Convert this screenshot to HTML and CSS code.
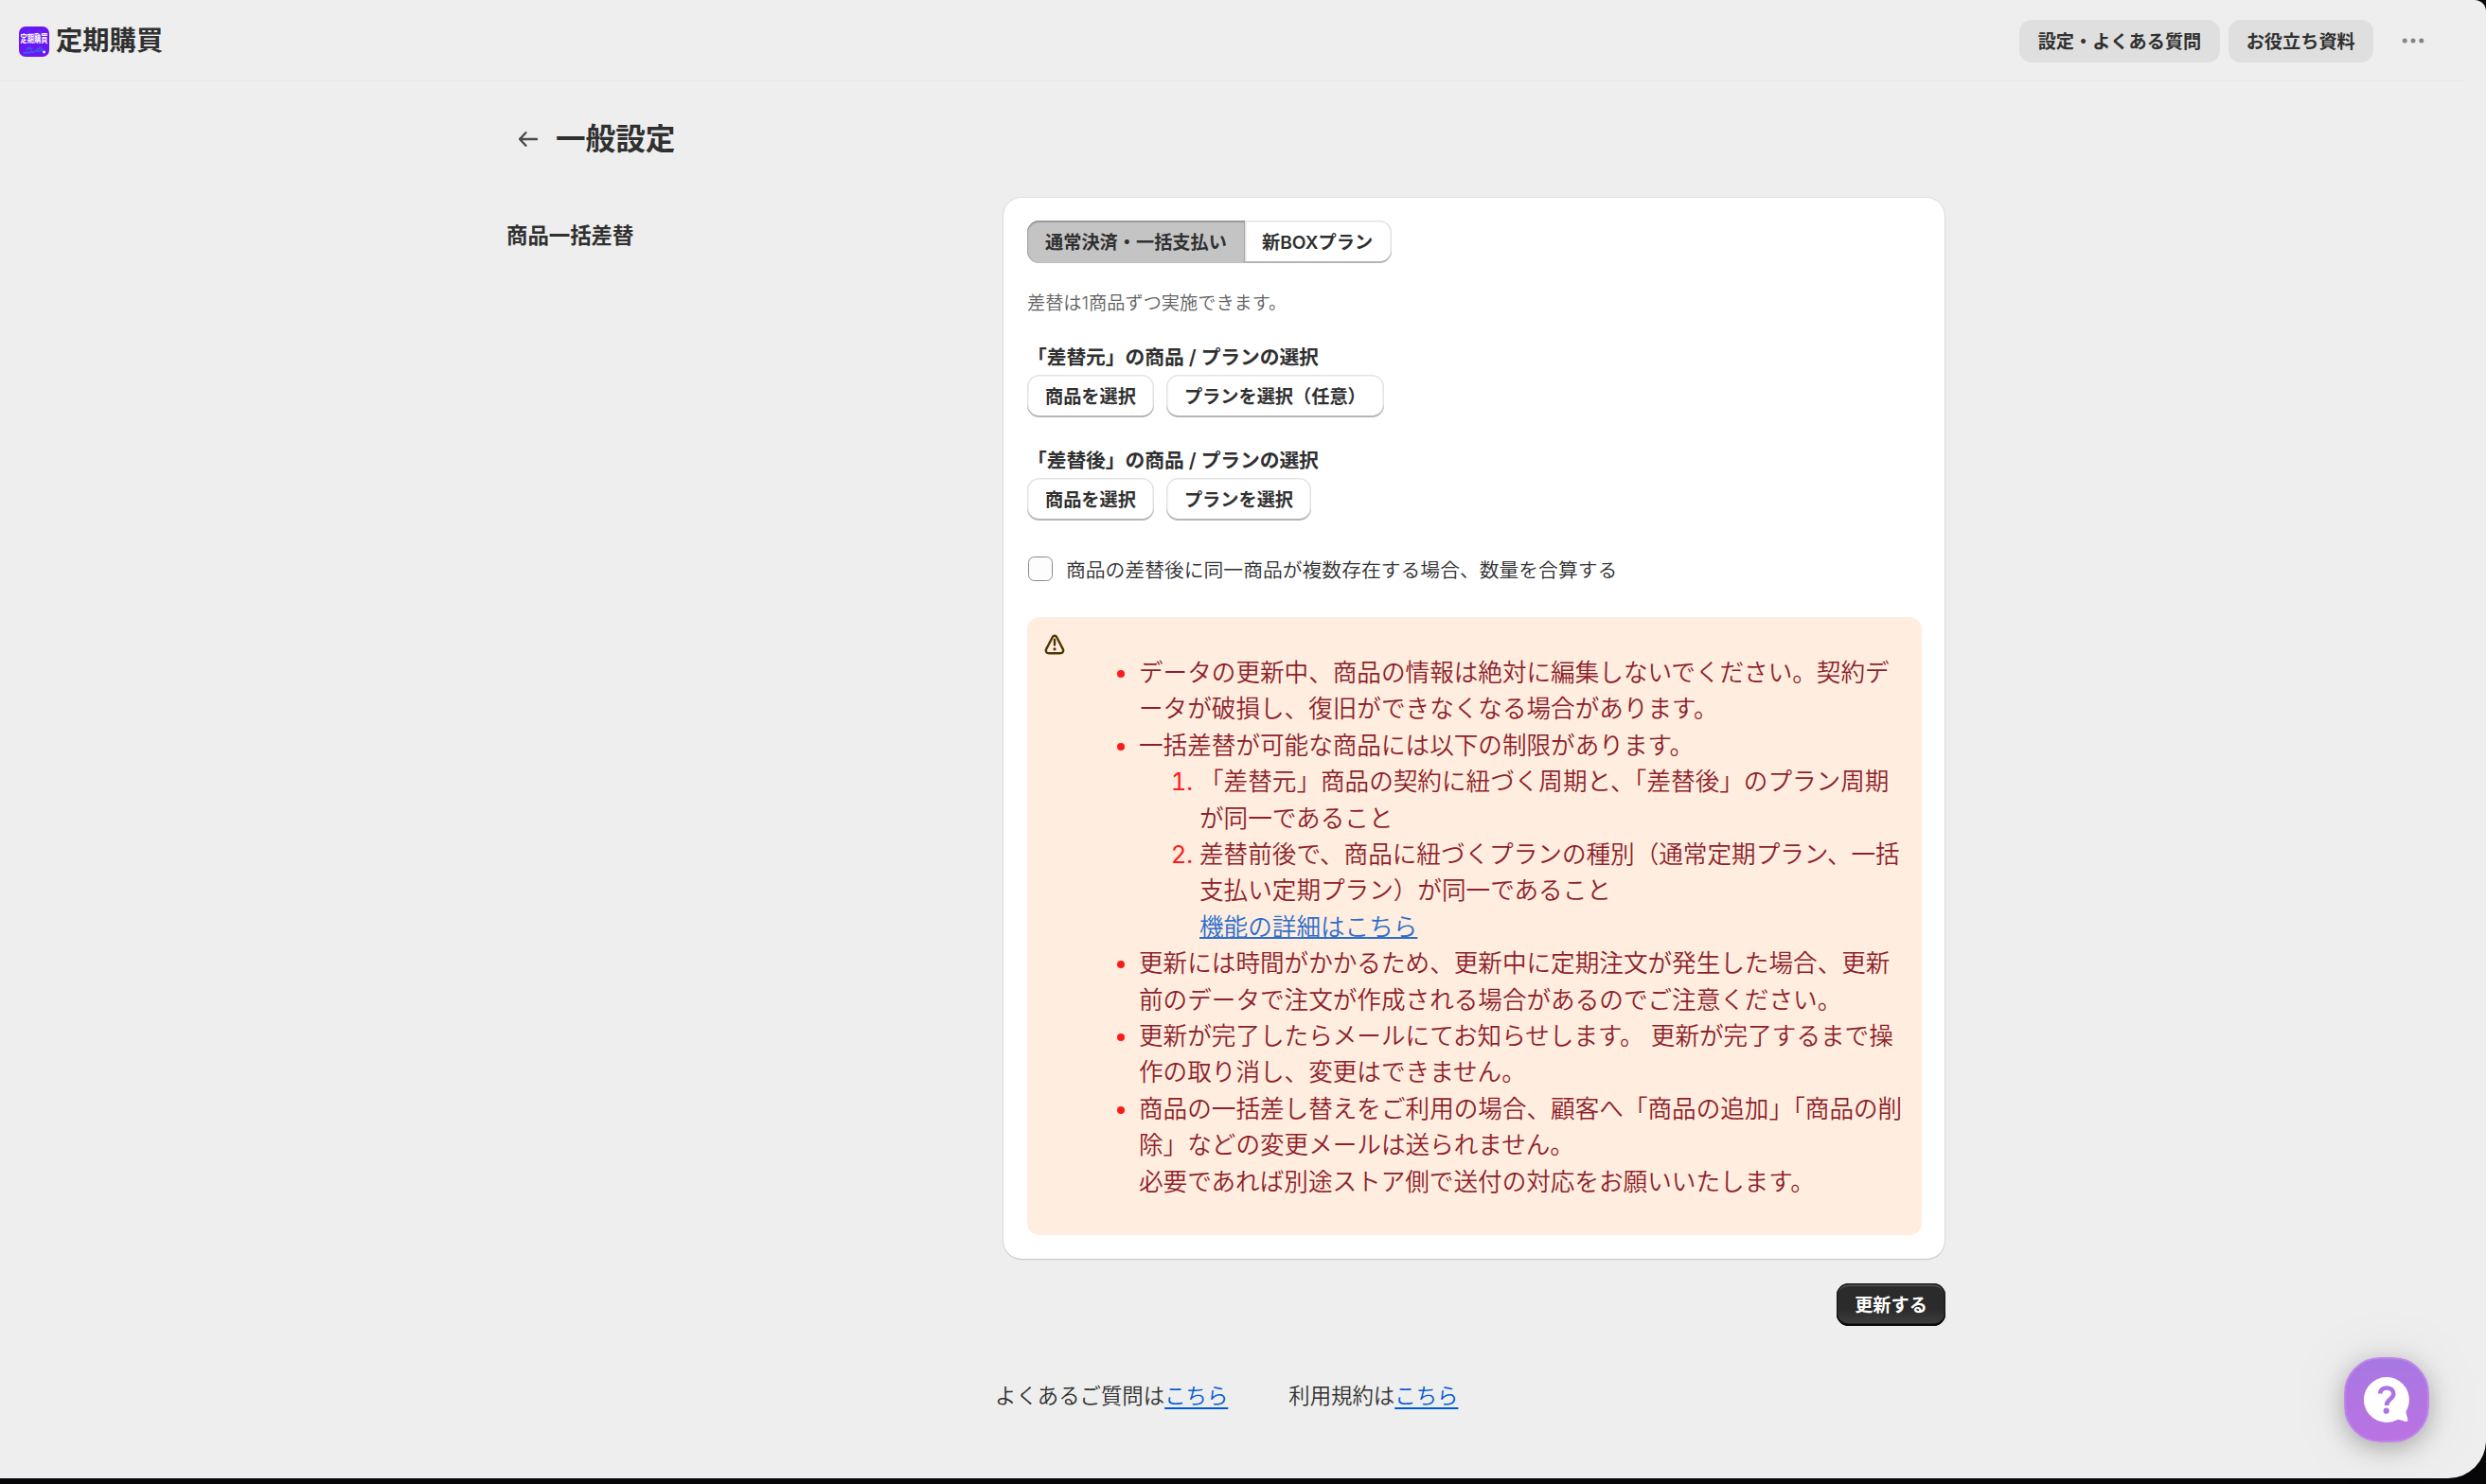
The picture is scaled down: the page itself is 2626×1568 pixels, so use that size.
FILE: index.html
```html
<!DOCTYPE html>
<html lang="ja">
<head>
  <meta charset="UTF-8">
  <meta name="viewport" content="width=device-width, initial-scale=1.0">
  <title>定期購買 - 一般設定</title>
  <link rel="stylesheet" href="styles.css">
</head>
<body>
  <div class="app">
    <header class="topbar">
      <div class="brand">
        <div class="brand-logo">
          <span class="brand-logo-text">定期購買</span>
          <svg class="brand-logo-wave" viewBox="0 0 32 32" fill="none">
            <circle cx="10" cy="6" r="2" fill="#5a2cf0"/><circle cx="22" cy="6" r="2" fill="#5a2cf0"/>
            <path d="M8 25l3-3 3 3M19 25l3-3 3 3" stroke="#4450e8" stroke-width="2"/>
            <path d="M5 29c2-2 3-2 4-1s2-2 4-1 2 0 4-1 2 1 4 0 2-1 4-1" stroke="#2a6bd8" stroke-width="1.6"/>
            <circle cx="26.500" cy="27" r="1.4" fill="#fff"/>
          </svg>
        </div>
        <span class="brand-name">定期購買</span>
      </div>
      <nav class="topbar-actions">
        <button class="btn-gray">設定・よくある質問</button>
        <button class="btn-gray">お役立ち資料</button>
        <button class="btn-more" aria-label="その他">
          <svg width="24" height="8" viewBox="0 0 24 8" fill="#858585">
            <circle cx="3.2" cy="4" r="2.5"/><circle cx="12" cy="4" r="2.5"/><circle cx="20.8" cy="4" r="2.5"/>
          </svg>
        </button>
      </nav>
    </header>

    <main class="page">
      <div class="page-title">
        <svg width="22" height="18" viewBox="0 0 22 18" fill="none" stroke="#4a4a4a" stroke-width="2.4" stroke-linecap="round" stroke-linejoin="round">
          <path d="M20 9H2.2M8.4 2.2L2 9l6.4 6.8"/>
        </svg>
        <h1>一般設定</h1>
      </div>

      <div class="layout">
        <h2 class="section-title">商品一括差替</h2>
        <div class="column">
          <section class="card">
            <div class="segmented">
              <button class="segment pressed">通常決済・一括支払い</button>
              <button class="segment">新BOXプラン</button>
            </div>
            <p class="help">差替は1商品ずつ実施できます。</p>

            <div class="group">
              <h3>「差替元」の商品 / プランの選択</h3>
              <div class="buttons">
                <button class="btn">商品を選択</button>
                <button class="btn">プランを選択（任意）</button>
              </div>
            </div>
            <div class="group">
              <h3>「差替後」の商品 / プランの選択</h3>
              <div class="buttons">
                <button class="btn">商品を選択</button>
                <button class="btn">プランを選択</button>
              </div>
            </div>

            <label class="check">
              <input type="checkbox">
              <span>商品の差替後に同一商品が複数存在する場合、数量を合算する</span>
            </label>

            <div class="banner">
              <svg class="banner-icon" width="32" height="32" viewBox="0 0 20 20" fill="#4f3600">
                <path d="M10 6a.75.75 0 0 1 .75.75v3.5a.75.75 0 0 1-1.5 0v-3.5a.75.75 0 0 1 .75-.75Z"/>
                <path d="M11 13a1 1 0 1 1-2 0 1 1 0 0 1 2 0Z"/>
                <path fill-rule="evenodd" d="M10 3.5c-1.045 0-1.784.702-2.152 1.447a449.26 449.26 0 0 1-2.005 3.847l-.028.052a403.426 403.426 0 0 0-2.008 3.856c-.372.752-.478 1.75.093 2.614.57.863 1.542 1.184 2.464 1.184h7.272c.922 0 1.895-.32 2.464-1.184.57-.864.465-1.862.093-2.614-.21-.424-1.113-2.147-2.004-3.847l-.032-.061a429.497 429.497 0 0 1-2.005-3.847c-.368-.745-1.107-1.447-2.152-1.447Zm-.808 2.112c.404-.816 1.212-.816 1.616 0 .202.409 1.112 2.145 2.022 3.88a418.904 418.904 0 0 1 2.018 3.875c.404.817 0 1.633-1.212 1.633h-7.272c-1.212 0-1.617-.816-1.212-1.633.202-.408 1.113-2.147 2.023-3.883a421.932 421.932 0 0 0 2.017-3.872Z"/>
              </svg>
              <ul class="notes">
                <li><span>データの更新中、商品の情報は絶対に編集しないでください。契約データが破損し、復旧ができなくなる場合があります。</span></li>
                <li><span>一括差替が可能な商品には以下の制限があります。</span>
                  <ol>
                    <li><span>「差替元」商品の契約に紐づく周期と、「差替後」のプラン周期が同一であること</span></li>
                    <li><span>差替前後で、商品に紐づくプランの種別（通常定期プラン、一括支払い定期プラン）が同一であること</span><br><a href="#">機能の詳細はこちら</a></li>
                  </ol>
                </li>
                <li><span>更新には時間がかかるため、更新中に定期注文が発生した場合、更新前のデータで注文が作成される場合があるのでご注意ください。</span></li>
                <li><span>更新が完了したらメールにてお知らせします。 更新が完了するまで操作の取り消し、変更はできません。</span></li>
                <li><span>商品の一括差し替えをご利用の場合、顧客へ「商品の追加」「商品の削除」などの変更メールは送られません。<br>必要であれば別途ストア側で送付の対応をお願いいたします。</span></li>
              </ul>
            </div>
          </section>
          <button class="btn-primary">更新する</button>
        </div>
      </div>
    </main>

    <footer class="footer">
      <p>よくあるご質問は<a href="#">こちら</a></p>
      <p>利用規約は<a href="#">こちら</a></p>
    </footer>
  </div>

  <button class="help-fab" aria-label="ヘルプ">
    <svg width="50" height="50" viewBox="0 0 50 50">
      <path d="M25 1a24 24 0 1 0 11 45.3c1-.5 2-.5 3-.1l6 1.700c1.600.4 2.700-.6 2.400-2.200l-1.700-6.200c-.3-1-.2-2 .2-3A24 24 0 0 0 25 1z" fill="#fff"/>
      <path d="M18 18.500c.6-4 3.300-6 7-6 4.400 0 7.300 2.600 7.300 6.200 0 5.800-7.300 5.500-7.300 12.300" fill="none" stroke="#b072e2" stroke-width="4.600"/>
      <circle cx="24.700" cy="36.700" r="3.100" fill="#b072e2"/>
    </svg>
  </button>
</body>
</html>
```

FILE: styles.css
```css
* { box-sizing: border-box; }
html { background: #060608; }
body {
  margin: 0;
  height: 1568px;
  overflow: hidden;
  font-family: Inter, "Noto Sans CJK JP", sans-serif;
  font-size: 20.8px;
  font-weight: 350;
  color: #303030;
}
h1, h2, h3, p { margin: 0; }
button { font-family: inherit; border: 0; padding: 0; }
a { color: #005bd3; text-decoration: underline; }

.app {
  height: 1562px;
  background: #eee;
  border-radius: 0 12px 40px 0;
}

/* top bar */
.topbar {
  display: flex;
  align-items: center;
  justify-content: space-between;
  height: 86px;
  margin-right: 22px;
  padding-left: 20px;
  border-bottom: 1px solid #e6e6e6;
}
.brand { display: flex; align-items: center; gap: 7px; padding-top: 2px; }
.brand-logo {
  position: relative;
  width: 32px;
  height: 32px;
  border-radius: 7px;
  background: #6b17f5;
  overflow: hidden;
  text-align: center;
}
.brand-logo-text { display: block; margin: 8px -2px 0; font-size: 7.2px; line-height: 12px; font-weight: 700; color: #fff; transform: scaleY(1.5); }
.brand-logo-wave { position: absolute; inset: 0; }
.brand-name { margin-top: -2px; font-size: 28.3px; line-height: 32px; font-weight: 600; }
.topbar-actions { display: flex; align-items: center; gap: 9px; padding-top: 1px; }
.btn-gray {
  height: 45px;
  padding: 0 19.2px 1px;
  border-radius: 12.8px;
  background: #dfdfdf;
  color: #303030;
  font-size: 19.2px;
  font-weight: 600;
}
.btn-more { display: flex; margin: 0 43px 0 21px; background: none; }

/* page */
.page { width: 1520px; margin: 0 0 0 535px; }
.page-title { display: flex; align-items: center; gap: 18px; height: 48px; margin-top: 37px; padding-left: 12px; }
.page-title h1 { font-size: 31.6px; line-height: 38px; font-weight: 700; }
.layout { display: grid; grid-template-columns: 525px 994px; margin-top: 38px; }
.section-title { margin-top: 24px; font-size: 22.4px; line-height: 32px; font-weight: 600; }
.column { display: flex; flex-direction: column; align-items: flex-end; }
.card {
  width: 994px;
  height: 1121px;
  padding: 24px 24px 0 25px;
  border-radius: 19.2px;
  background: #fff;
  box-shadow: 0 1px 1px #c4c4c4, 0 0 0 1px #dedede;
}
.segmented { display: flex; }
.segment {
  height: 45px;
  padding: 0 20px 1px 18px;
  border-radius: 0 12.8px 12.8px 0;
  background: #fff;
  color: #303030;
  font-size: 19.2px;
  font-weight: 600;
  box-shadow: inset 0 -2px 0 #b5b5b5, inset 0 0 0 1.500px #e3e3e3;
}
.segment.pressed {
  width: 230px;
  padding: 0 19px 1px;
  border-radius: 12.8px 0 0 12.8px;
  background: #c4c4c4;
  box-shadow: inset 0 2px 1px #999, inset 1px 0 1px #a5a5a5, inset -1px 0 1px #aaa;
}
.help { margin-top: 26px; font-size: 19.2px; line-height: 32px; color: #616161; }
.group { margin-top: 26px; }
.group + .group { margin-top: 30px; }
.group h3 { font-size: 20.8px; line-height: 32px; font-weight: 600; letter-spacing: -.1px; }
.group .buttons { display: flex; gap: 13px; margin-top: 2px; }
.btn {
  height: 45px;
  padding: 0 19px 1px;
  border-radius: 12.8px;
  background: #fff;
  color: #303030;
  font-size: 19.2px;
  font-weight: 600;
  box-shadow: inset 0 -2px 0 #b5b5b5, inset 0 0 0 1.500px #e3e3e3;
}
.check { display: flex; align-items: center; gap: 14px; margin-top: 35px; height: 32px; }
.check input {
  appearance: none;
  width: 26px;
  height: 26px;
  margin: 0 0 0 1px;
  border: 1.500px solid #8a8a8a;
  border-radius: 6.4px;
  background: #fdfdfd;
}
.banner {
  display: flex;
  height: 653px;
  margin-top: 35px;
  padding: 13px 19px 0 13px;
  border-radius: 12.8px;
  background: #ffeddf;
}
.banner-icon { flex: none; }
.notes {
  flex: 1;
  margin: 27px 0 0 9px;
  padding-left: 64px;
  font-size: 25.6px;
  line-height: 38.4px;
  color: #ff1a1a;
}
.notes ol { margin: 0; padding-left: 64px; }
.notes li::marker { font-weight: 400; }
.notes span { color: #8e1f2b; }
.notes a { color: #2c6ecb; text-decoration-thickness: 2px; }
.btn-primary {
  width: 115px;
  height: 45px;
  margin: 26px -1px 0 0;
  padding-bottom: 1px;
  border-radius: 12.8px;
  background: linear-gradient(#2b2b2b 60%, #404040);
  color: #fff;
  font-size: 19.2px;
  font-weight: 600;
  box-shadow: inset 0 -2.500px 0 #0a0a0a, inset 0 0 0 1.500px #1a1a1a, inset 0 3px 0 #555;
}

.footer { display: flex; gap: 64px; margin: 58px 0 0 1051px; font-size: 22.4px; line-height: 32px; }
.footer a { text-decoration-thickness: 2px; text-underline-offset: 4px; }

/* floating help button */
.help-fab {
  position: absolute;
  left: 2476px;
  top: 1434px;
  display: flex;
  align-items: center;
  justify-content: center;
  width: 90px;
  height: 90px;
  border: 2px solid #bd86e8;
  border-radius: 38px;
  background: linear-gradient(#a778e2, #bb72e2);
  box-shadow: 0 6px 24px rgba(0, 0, 0, .26), 0 2px 70px rgba(0, 0, 0, .08);
}
```
